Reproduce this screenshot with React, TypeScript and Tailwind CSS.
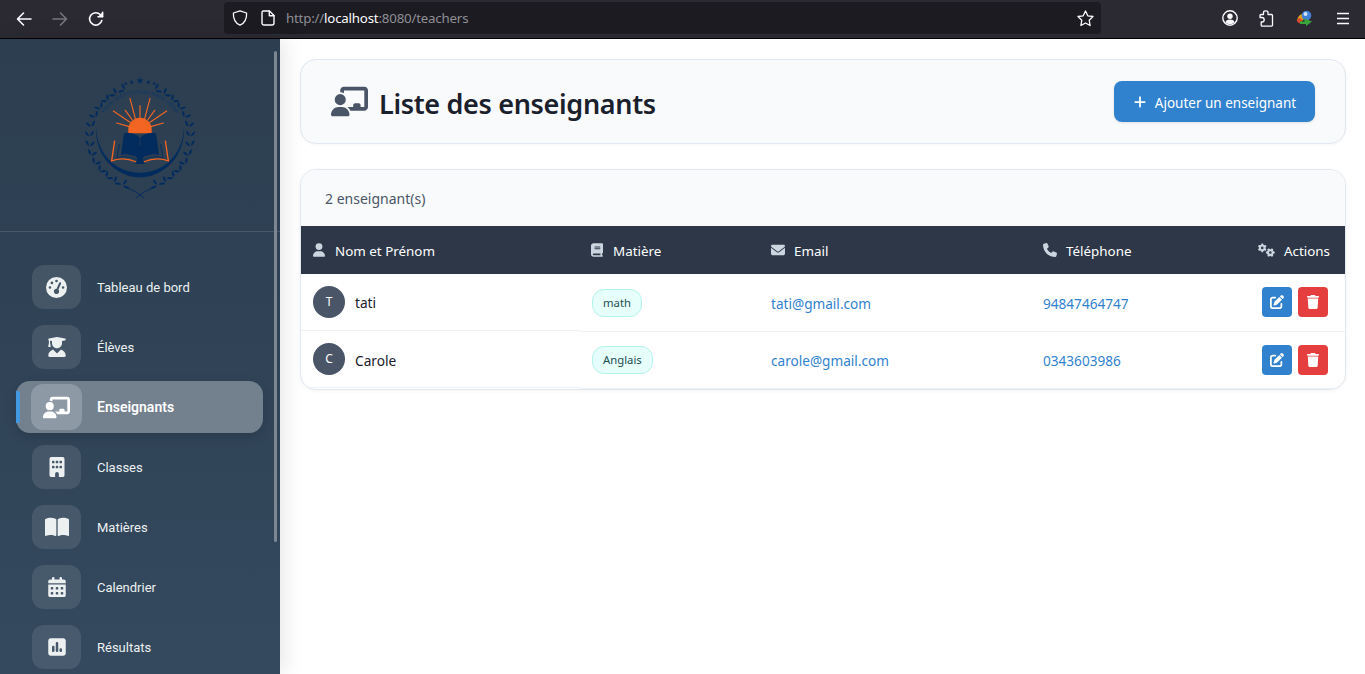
import React from "react";
import {
  FaGaugeHigh, FaUserGraduate, FaChalkboardUser, FaBuilding, FaBookOpen, FaCalendarDays, FaSquarePollVertical,
  FaUser, FaBook, FaEnvelope, FaPhone, FaGears, FaPenToSquare, FaTrash, FaPlus,
} from "react-icons/fa6";

const COLS = "grid grid-cols-[279px_179px_272px_1fr_100px]";

function Logo() {
  const navy = "#022b5e";
  const orange = "#f26522";
  const cx = 210, cy = 198, r = 152;
  const leaves: React.ReactNode[] = [];
  for (let i = 0; i < 14; i++) {
    const deg = 16 + i * 11;
    [-1, 1].forEach((side) => {
      const a = (deg * Math.PI) / 180;
      const x = cx + side * r * Math.sin(a);
      const y = cy + r * Math.cos(a);
      const rot = side * (deg - 90);
      leaves.push(
        <g key={`${i}${side}`} transform={`translate(${x.toFixed(1)} ${y.toFixed(1)}) rotate(${rot.toFixed(1)})`}>
          <path d="M-1.5 9 C-10 7 -14 -1 -14 -7 C-7 -5 -2 1 -1.5 9Z" fill={navy} />
          <path d="M1.5 9 C10 7 14 -1 14 -7 C7 -5 2 1 1.5 9Z" fill={navy} />
        </g>
      );
    });
  }
  const star = (x: number, y: number, s: number) => {
    const pts: string[] = [];
    for (let i = 0; i < 10; i++) {
      const rr = i % 2 === 0 ? s : s * 0.42;
      const a = (-90 + i * 36) * Math.PI / 180;
      pts.push(`${(x + rr * Math.cos(a)).toFixed(1)},${(y + rr * Math.sin(a)).toFixed(1)}`);
    }
    return <polygon key={x} points={pts.join(" ")} fill={navy} />;
  };
  return (
    <svg width="140" height="130" viewBox="0 0 420 390">
      {leaves}
      {star(210, 32, 11)}{star(185, 37, 7)}{star(235, 37, 7)}{star(167, 41, 6)}{star(253, 41, 6)}
      <path d="M78 165 C72 260 140 322 210 322 C280 322 348 260 342 165 C342 255 280 308 210 308 C140 308 78 255 78 165Z" fill={navy} />
      <path d="M165 352 C185 358 205 368 222 385 M255 352 C235 358 215 368 198 385" stroke={navy} strokeWidth="3" fill="none" />
      <path id="arcText" d="M86 175 A126 126 0 0 1 334 175" fill="none" />
      <text fontFamily="'Liberation Sans', sans-serif" fontSize="16" fill="#0b3566" letterSpacing="0.3">
        <textPath href="#arcText" startOffset="50%" textAnchor="middle">YOUR INSTITUTION NAME HERE</textPath>
      </text>
      <g stroke={orange} strokeWidth="3.5" strokeLinecap="round">
        <path d="M210 107 L210 146 M180 86 L196 146 M240 86 L224 146 M166 121 L187 150 M254 121 L233 150 M130 123 L180 157 M290 123 L240 157 M140 159 L178 170 M280 159 L242 170" />
      </g>
      <path d="M175 178 A35 35 0 0 1 245 178 L245 190 L175 190Z" fill={orange} />
      <path d="M162 190 C180 186 200 192 209 203 L209 270 C195 254 172 252 153 255 Z" fill={navy} />
      <path d="M258 190 C240 186 220 192 211 203 L211 270 C225 254 248 252 267 255 Z" fill={navy} />
      <path d="M134 212 L125 273 C150 262 175 266 200 276 M286 212 L295 273 C270 262 245 266 220 276" stroke={orange} strokeWidth="4" fill="none" />
      <path d="M148 222 L141 264 C165 256 185 260 203 272 M272 222 L279 264 C255 256 235 260 217 272" stroke={navy} strokeWidth="2.5" fill="none" />
      <path d="M210 226 L222 250 L218 270 L225 282 L195 282 L202 270 L198 250Z" fill={navy} />
      <text x="210" y="302" textAnchor="middle" fontFamily="'Liberation Sans', sans-serif" fontSize="10" fill="#1d3f68">ESTD. 2000</text>
    </svg>
  );
}

function Toolbar() {
  const stroke = { fill: "none", stroke: "#fbfbfe", strokeWidth: 1.6, strokeLinecap: "round" as const, strokeLinejoin: "round" as const };
  return (
    <div className="h-[39px] shrink-0 flex items-start bg-[#2b2a33] border-b border-black">
      <div className="w-[224px] h-[38px] flex items-center pl-[16px] gap-[20px] shrink-0">
        <svg width="16" height="16" viewBox="0 0 16 16" {...stroke}><path d="M15 8H1.5M7.5 2L1.5 8l6 6" /></svg>
        <svg width="16" height="16" viewBox="0 0 16 16" {...stroke} stroke="#77767d"><path d="M1 8h13.5M8.5 2l6 6-6 6" /></svg>
        <svg width="16" height="16" viewBox="0 0 16 16" {...stroke}><path d="M13.8 9.5A6.2 6.2 0 1 1 12.2 3.5L14.5 5.5" /><path d="M14.6 1.2v4.6H10" fill="#fbfbfe" /></svg>
      </div>
      <div className="w-[877px] h-[32px] mt-[2px] bg-[#1c1b22] rounded-[4px] flex items-center pl-[8px] pr-[7px] shrink-0">
        <svg width="16" height="16" viewBox="0 0 16 16" {...stroke} strokeWidth={1.3}><path d="M8 .8L14.6 3c.3 6-1.6 10-6.6 12.2C3 13 1.1 9 1.4 3z" /></svg>
        <svg className="ml-[13px]" width="14" height="16" viewBox="0 0 14 16" {...stroke} strokeWidth={1.4}><path d="M2.5 1h6L13 5.5V13a2 2 0 0 1-2 2H3a2 2 0 0 1-2-2V2.5A1.5 1.5 0 0 1 2.5 1z" /><path d="M8.3 1v4.7H13" /></svg>
        <div className="ml-[11px] pt-[2px] text-[13.3px] text-[#8f8f94] font-['Noto_Sans',sans-serif] tracking-[-0.2px]">http://<span className="text-[#fbfbfe]">localhost</span>:8080/teachers</div>
        <svg className="ml-auto" width="17" height="17" viewBox="0 0 17 17" {...stroke} strokeWidth={1.3}><path d="M8.5 1l2.3 4.8 5.2.7-3.8 3.7.9 5.3-4.6-2.5-4.6 2.5.9-5.3L1 6.5l5.2-.7z" /></svg>
      </div>
      <div className="flex-1 h-[38px] relative">
        <svg className="absolute left-[121px] top-[10px]" width="16" height="16" viewBox="0 0 16 16">
          <circle cx="8" cy="8" r="7.2" fill="none" stroke="#fbfbfe" strokeWidth="1.4" />
          <circle cx="8" cy="6.2" r="2.7" fill="#fbfbfe" />
          <path d="M3.4 12.2c1-2 2.6-2.6 4.6-2.6s3.6.6 4.6 2.6C11.4 13.6 9.8 14 8 14s-3.4-.4-4.6-1.8z" fill="#fbfbfe" />
        </svg>
        <svg className="absolute left-[158px] top-[10px]" width="15" height="17" viewBox="0 0 15 17" {...stroke} strokeWidth={1.3}>
          <path d="M4.5 4.5V2.5C4.5 1.4 5.4.8 6.7.8S9 1.4 9 2.5v2h3.5a1 1 0 0 1 1 1v9.7a1 1 0 0 1-1 1H3.2a1 1 0 0 1-1-1V12H3c1.4 0 2.2-.8 2.2-2.2S4.4 7.5 3 7.5H1V5.5a1 1 0 0 1 1-1z" />
        </svg>
        <svg className="absolute left-[195px] top-[10px]" width="17" height="17" viewBox="0 0 17 17">
          <path d="M1 11c0-3 2-6 5-7l2 5-3 3z" fill="#e0a21c" />
          <path d="M1 11c.5 1.5 2 2.5 4 2.5L6 9 2 8z" fill="#d9442b" />
          <circle cx="10.5" cy="5.5" r="4.8" fill="#3f7fd6" />
          <circle cx="9.5" cy="4" r="2" fill="#cfe2f7" />
          <path d="M4 11.5h4.5V8.5L16 11.5l-6 4.5v-2H4z" fill="#3aa53a" />
        </svg>
        <svg className="absolute left-[235px] top-[12px]" width="14" height="13" viewBox="0 0 14 13" stroke="#fbfbfe" strokeWidth="1.4"><path d="M1 1.5h12M1 6.5h12M1 11.5h12" /></svg>
      </div>
    </div>
  );
}

const NAV = [
  { label: "Tableau de bord", icon: <FaGaugeHigh size={21} /> },
  { label: "Élèves", icon: <FaUserGraduate size={20} /> },
  { label: "Enseignants", icon: <FaChalkboardUser size={27} />, active: true },
  { label: "Classes", icon: <FaBuilding size={20} /> },
  { label: "Matières", icon: <FaBookOpen size={24} /> },
  { label: "Calendrier", icon: <FaCalendarDays size={20} /> },
  { label: "Résultats", icon: <FaSquarePollVertical size={20} /> },
];

function Sidebar() {
  return (
    <aside className="relative z-10 w-[280px] shrink-0 overflow-hidden bg-gradient-to-b from-[#2c3e50] to-[#34495e] shadow-[4px_0_20px_rgba(0,0,0,0.1)] font-['Roboto',sans-serif]">
      <div className="h-[193px] flex items-center justify-center border-b border-[#ffffff1f]">
        <Logo />
      </div>
      <nav className="pt-[29px] flex flex-col gap-2">
        {NAV.map((n) => (
          <div
            key={n.label}
            className={
              n.active
                ? "relative ml-4 w-[247px] h-[52px] shrink-0 flex items-center pl-[15px] gap-[15px] rounded-[14px] bg-[#73808e] shadow-[0_4px_12px_rgba(0,0,0,0.15)] text-white font-semibold"
                : "ml-4 w-[247px] h-[52px] shrink-0 flex items-center pl-4 gap-4 text-[#ecf0f1]"
            }
          >
            {n.active && <span className="absolute left-0 top-[10px] h-[32px] w-[4px] bg-[#4299e1] rounded-r-[2px]" />}
            <span
              className={
                n.active
                  ? "w-[51px] h-[46px] rounded-[12px] bg-[#8d99a5] flex items-center justify-center text-white"
                  : "w-[49px] h-[44px] rounded-[12px] bg-[#ffffff1a] flex items-center justify-center text-[#ecf0f1]"
              }
            >
              {n.icon}
            </span>
            <span className={n.active ? "text-[14px] pt-[1px]" : "text-[13px] pt-[2px]"}>{n.label}</span>
          </div>
        ))}
      </nav>
      <div className="absolute left-[274px] top-[12px] w-[3px] h-[491px] rounded-full bg-[#7c8791]" />
    </aside>
  );
}

function Head({ icon, children, right }: { icon: React.ReactNode; children: React.ReactNode; right?: boolean }) {
  return (
    <div className={right ? "flex items-center justify-end gap-[9px] pr-[15px]" : "flex items-center gap-[10px] pl-[12px]"}>
      <span className="text-[#cbd5e0] flex">{icon}</span>
      <span className="pt-[2px]">{children}</span>
    </div>
  );
}

function Row({ name, subject, email, phone }: { name: string; subject: string; email: string; phone: string }) {
  const cell = "h-[57.5px] flex items-center border-b border-[#edf2f7]";
  return (
    <div className={COLS}>
      <div className="h-[56.5px] flex items-center gap-[10px] pl-[12px] border-b border-[#edf2f7]">
        <span className="w-[32px] h-[32px] rounded-full bg-[#4a5568] text-white text-[12px] flex items-center justify-center">{name[0].toUpperCase()}</span>
        <span className="text-[13.7px] text-[#1a202c] pt-[4px]">{name}</span>
      </div>
      <div className={`${cell} pl-[12px] pt-[1px]`}>
        <span className="h-[28px] px-[10px] pt-[1px] flex items-center rounded-[12px] bg-[#e6fffa] border border-[#b2f5ea] text-[11.3px] text-[#234e52]">{subject}</span>
      </div>
      <div className={`${cell} pl-[12px] text-[13.6px] text-[#3182ce] pt-[3px]`}>{email}</div>
      <div className={`${cell} pl-[12px] text-[13.6px] text-[#3182ce] pt-[3px]`}>{phone}</div>
      <div className={`${cell} pl-[17px] gap-[6px]`}>
        <button className="w-[30px] h-[30px] rounded-[4px] bg-[#3182ce] text-white flex items-center justify-center"><FaPenToSquare size={14} /></button>
        <button className="w-[30px] h-[30px] rounded-[4px] bg-[#e53e3e] text-white flex items-center justify-center"><FaTrash size={14} /></button>
      </div>
    </div>
  );
}

export default function App() {
  return (
    <div className="h-screen flex flex-col overflow-hidden bg-white font-['Noto_Sans',sans-serif]">
      <Toolbar />
      <div className="flex-1 flex min-h-0">
        <Sidebar />
        <main className="flex-1 min-w-0 pt-[20px] pl-[20px] pr-[19px]">
          <div className="h-[85px] rounded-[16px] bg-[#f8fafc] border border-[#e2e8f0] shadow-[0_1px_3px_rgba(0,0,0,0.04)] flex items-center pl-[30px] pr-[30px]">
            <FaChalkboardUser size={37} className="text-[#4a5568]" />
            <h1 className="ml-[11px] pt-[6px] text-[27px] font-semibold text-[#1a202c] tracking-[-0.33px]">Liste des enseignants</h1>
            <button className="ml-auto w-[201px] h-[41px] pt-[3px] rounded-[8px] bg-[#3182ce] text-white text-[13.5px] flex items-center justify-center gap-[8px] shadow-[0_1px_3px_rgba(0,0,0,0.1)]">
              <FaPlus size={14} className="-mt-[3px]" />
              Ajouter un enseignant
            </button>
          </div>
          <div className="mt-[25px] rounded-[16px] border border-[#e2e8f0] bg-white overflow-hidden shadow-[0_1px_4px_rgba(0,0,0,0.05)]">
            <div className="h-[56px] bg-[#f8fafc] flex items-center pl-[24px] text-[14px] text-[#4a5568]">2 enseignant(s)</div>
            <div className={`${COLS} h-[48px] items-center bg-[#2d3748] text-white text-[13.4px]`}>
              <Head icon={<FaUser className="w-[12px] h-[14px]" />}>Nom et Prénom</Head>
              <Head icon={<FaBook className="w-[12px] h-[14px] -ml-[1px]" />}>Matière</Head>
              <Head icon={<FaEnvelope className="w-[14px] h-[14px] -mr-[1px]" />}>Email</Head>
              <Head icon={<FaPhone className="w-[14px] h-[14px] -mr-[1px]" />}>Téléphone</Head>
              <Head right icon={<FaGears className="w-[17px] h-[14px]" />}>Actions</Head>
            </div>
            <Row name="tati" subject="math" email="tati@gmail.com" phone="94847464747" />
            <Row name="Carole" subject="Anglais" email="carole@gmail.com" phone="0343603986" />
          </div>
        </main>
      </div>
    </div>
  );
}
